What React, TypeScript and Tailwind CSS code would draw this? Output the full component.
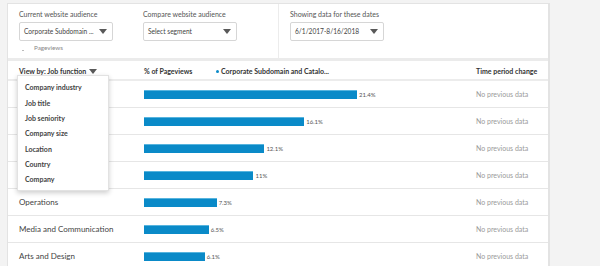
import React from "react";

const rows = [
  { label: "Engineering", pct: 21.4 },
  { label: "Sales", pct: 16.1 },
  { label: "Marketing", pct: 12.1 },
  { label: "Finance", pct: 11 },
  { label: "Operations", pct: 7.3 },
  { label: "Media and Communication", pct: 6.5 },
  { label: "Arts and Design", pct: 6.1 },
];

const menuItems = [
  "Company industry",
  "Job title",
  "Job seniority",
  "Company size",
  "Location",
  "Country",
  "Company",
];

const Caret: React.FC = () => (
  <svg width="8" height="5" viewBox="0 0 8 5" className="shrink-0">
    <path d="M0 0h8L4 5z" fill="#595959" />
  </svg>
);

const Select: React.FC<{ text: string; width: string }> = ({ text, width }) => (
  <div
    className={`flex items-center justify-between h-[19px] border border-[#d6d6d6] rounded-[2px] pl-[4px] pr-[5px] ${width}`}
  >
    <span className="text-[6.6px] text-[#444] whitespace-nowrap">{text}</span>
    <Caret />
  </div>
);

const App: React.FC = () => {
  return (
    <div
      className="w-[600px] h-[266px] bg-[#f3f3f3] overflow-hidden pt-[3px] pl-[7px]"
      style={{ fontFamily: "Lato, 'Open Sans', sans-serif" }}
    >
      <div className="relative w-[543px] h-[280px] bg-white border border-[#e3e3e3] border-r-2">
        {/* Header filters */}
        <div className="flex h-[57px] border-b-[3px] border-[#ebebeb]">
          <div className="flex w-[270px] pl-[11px] pt-[5px]">
            <div className="w-[124px]">
              <p className="text-[7px] text-[#555] leading-[10px] mb-[3px]">Current website audience</p>
              <Select text="Corporate Subdomain ..." width="w-[94px]" />
              <div className="flex items-center mt-[2px] h-[10px]">
                <span className="w-[2px] h-[1px] bg-[#bbb] ml-[3px] mt-[5px]" />
                <span className="text-[6.3px] text-[#888] ml-[10px]">Pageviews</span>
              </div>
            </div>
            <div>
              <p className="text-[7px] text-[#555] leading-[10px] mb-[3px]">Compare website audience</p>
              <Select text="Select segment" width="w-[94px]" />
            </div>
          </div>
          <div className="border-l border-[#ececec] pl-[11px] pt-[5px]">
            <p className="text-[7px] text-[#555] leading-[10px] mb-[3px]">Showing data for these dates</p>
            <Select text="6/1/2017-8/16/2018" width="w-[94px]" />
          </div>
        </div>

        {/* Table */}
        <div className="relative">
          <div className="flex items-center h-[20px] pt-[2px] border-b-2 border-[#ececec] text-[7px] font-bold text-[#333]">
            <div className="w-[136px] pl-[11px] flex items-center gap-[3px]">
              <span>View by: Job function</span>
              <Caret />
            </div>
            <div className="w-[72px]">% of Pageviews</div>
            <div className="w-[260px] flex items-center gap-[2px]">
              <span className="w-[3px] h-[3px] rounded-full bg-[#0a8ac8]" />
              <span>Corporate Subdomain and Catalo...</span>
            </div>
            <div>Time period change</div>
          </div>

          {rows.map((r) => (
            <div key={r.label} className="flex items-center h-[27px] border-b border-[#e6e6e6]">
              <div className="w-[136px] pl-[11px] text-[8px] text-[#444]">{r.label}</div>
              <div className="w-[332px] flex items-center">
                <div
                  className="h-[9px] bg-[#0a8ac8] border-t border-[#57b4de]"
                  style={{ width: `${r.pct * 9.95}px` }}
                />
                <span className="ml-[2px] text-[6px] text-[#555]">{r.pct}%</span>
              </div>
              <div className="text-[7px] text-[#9a9a9a]">No previous data</div>
            </div>
          ))}

          {/* View by menu */}
          <div className="absolute left-[9px] top-[14px] w-[92px] bg-white border border-[#e2e2e2] shadow-[0_2px_5px_rgba(0,0,0,0.2)] pt-[4px] pb-[3px]">
            {menuItems.map((m) => (
              <div key={m} className="h-[15.3px] pl-[7px] flex items-center text-[7px] font-bold text-[#444]">
                {m}
              </div>
            ))}
          </div>
        </div>
      </div>
    </div>
  );
};

export default App;
